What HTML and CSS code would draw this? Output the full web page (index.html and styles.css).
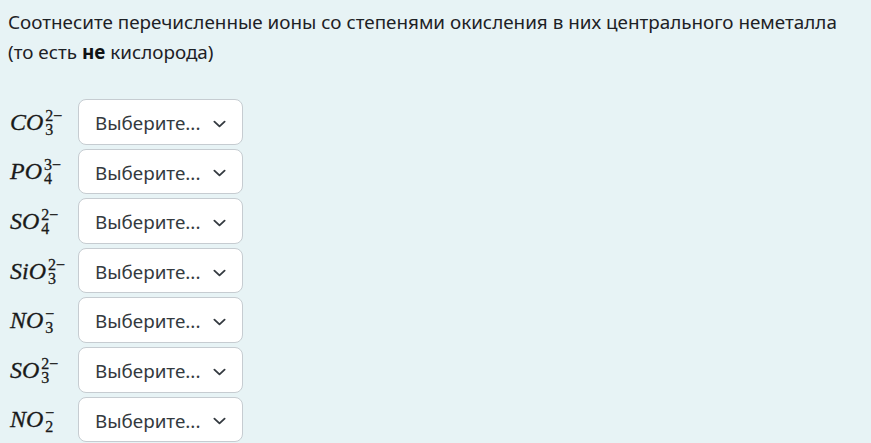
FILE: index.html
```html
<!DOCTYPE html>
<html lang="ru">
<head>
  <meta charset="UTF-8" />
  <meta name="viewport" content="width=device-width, initial-scale=1.0"/>
  <title>Соответствие</title>
  <link rel="stylesheet" href="styles.css">
</head>
<body>
  <div class="qtext">
    <p>Соотнесите перечисленные ионы со степенями окисления в них центрального неметалла (то есть <b>не</b> кислорода)</p>
  </div>

  <div class="answer">
    <div class="row">
      <span class="ion"><i>CO</i><span class="idx"><span class="sup">2−</span><span class="sub">3</span></span></span>
      <div class="select">Выберите... <svg class="chev" viewBox="0 0 14 8"><path d="M1.5 1.5 L7 6.5 L12.5 1.5"/></svg></div>
    </div>
    <div class="row">
      <span class="ion"><i>PO</i><span class="idx"><span class="sup">3−</span><span class="sub">4</span></span></span>
      <div class="select">Выберите... <svg class="chev" viewBox="0 0 14 8"><path d="M1.5 1.5 L7 6.5 L12.5 1.5"/></svg></div>
    </div>
    <div class="row">
      <span class="ion"><i>SO</i><span class="idx"><span class="sup">2−</span><span class="sub">4</span></span></span>
      <div class="select">Выберите... <svg class="chev" viewBox="0 0 14 8"><path d="M1.5 1.5 L7 6.5 L12.5 1.5"/></svg></div>
    </div>
    <div class="row">
      <span class="ion"><i>SiO</i><span class="idx"><span class="sup">2−</span><span class="sub">3</span></span></span>
      <div class="select">Выберите... <svg class="chev" viewBox="0 0 14 8"><path d="M1.5 1.5 L7 6.5 L12.5 1.5"/></svg></div>
    </div>
    <div class="row">
      <span class="ion"><i>NO</i><span class="idx"><span class="sup">−</span><span class="sub">3</span></span></span>
      <div class="select">Выберите... <svg class="chev" viewBox="0 0 14 8"><path d="M1.5 1.5 L7 6.5 L12.5 1.5"/></svg></div>
    </div>
    <div class="row">
      <span class="ion"><i>SO</i><span class="idx"><span class="sup">2−</span><span class="sub">3</span></span></span>
      <div class="select">Выберите... <svg class="chev" viewBox="0 0 14 8"><path d="M1.5 1.5 L7 6.5 L12.5 1.5"/></svg></div>
    </div>
    <div class="row">
      <span class="ion"><i>NO</i><span class="idx"><span class="sup">−</span><span class="sub">2</span></span></span>
      <div class="select">Выберите... <svg class="chev" viewBox="0 0 14 8"><path d="M1.5 1.5 L7 6.5 L12.5 1.5"/></svg></div>
    </div>
  </div>
</body>
</html>
```

FILE: styles.css
```css
body { margin: 0; padding: 8px 8px; background: #e7f3f5; color: #1d2125; font-family: "Noto Sans", sans-serif; font-size: 18.85px; line-height: 29.5px; }
.qtext p { margin: 0 0 32px; }
.qtext b { color: #0f1214; }

.answer { display: flex; flex-direction: column; gap: 4px; }
.row { display: flex; align-items: center; height: 45.6px; }

/* ion formula, typeset by hand */
.ion { width: 68px; padding-left: 2px; display: flex; align-items: center; font-family: "Liberation Serif", serif; font-size: 24px; line-height: 28px; color: #1a1a1a; -webkit-text-stroke: 0.3px #1a1a1a; }
.idx { display: inline-flex; flex-direction: column; font-size: 16px; line-height: 14px; margin-left: 2px; margin-top: 2px; }

.select { box-sizing: border-box; width: 165px; height: 45.6px; display: flex; align-items: center; justify-content: space-between; padding: 4px 16px 0 16px; background: #fff; border: 1px solid #c6ccd1; border-radius: 8px; color: #343a40; }
.chev { width: 13px; height: 8px; fill: none; stroke: #343a40; stroke-width: 2; stroke-linecap: round; stroke-linejoin: round; }
```
